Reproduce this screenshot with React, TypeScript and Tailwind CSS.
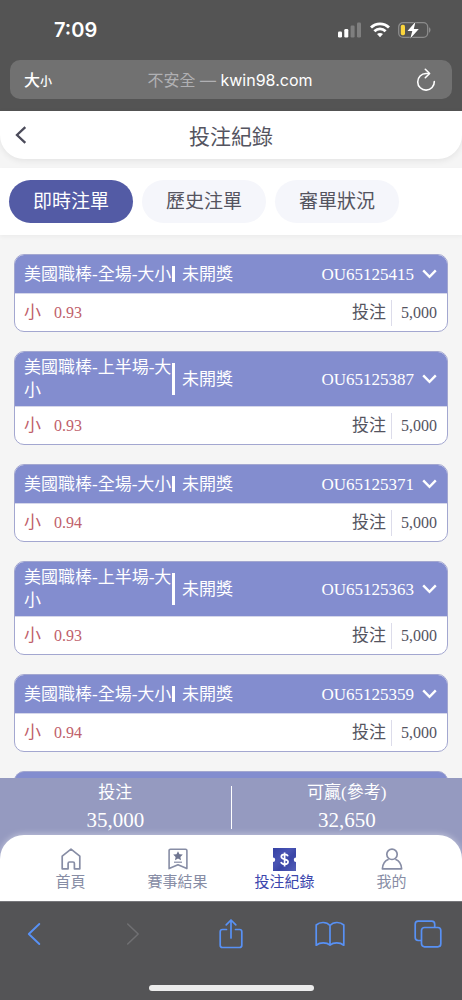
import React from "react";

const sans = 'font-["Inter","Noto_Sans_CJK_TC",sans-serif]';
const serif = 'font-["Liberation_Serif","Noto_Sans_CJK_TC",serif]';

type Bet = {
  id: string;
  title: string;
  odds: string;
};

const bets: Bet[] = [
  { id: "OU65125415", title: "美國職棒-全場-大小", odds: "0.93" },
  { id: "OU65125387", title: "美國職棒-上半場-大小", odds: "0.93" },
  { id: "OU65125371", title: "美國職棒-全場-大小", odds: "0.94" },
  { id: "OU65125363", title: "美國職棒-上半場-大小", odds: "0.93" },
  { id: "OU65125359", title: "美國職棒-全場-大小", odds: "0.94" },
];

const tabs = ["即時注單", "歷史注單", "審單狀況"];

const StatusBar = () => (
  <div className="flex h-[60px] items-center justify-between pl-[54px] pr-[31px]">
    <span className="text-xl font-semibold">7:09</span>
    <div className="flex items-center gap-2">
      <svg width="24" height="16" viewBox="0 0 24 16" fill="#fff">
        <rect x="0" y="9.5" width="4" height="6" rx="1.2" />
        <rect x="6.3" y="7" width="4" height="8.5" rx="1.2" />
        <rect x="12.6" y="3.5" width="4" height="12" rx="1.2" opacity=".25" />
        <rect x="19" y="0.5" width="4" height="15" rx="1.2" opacity=".25" />
      </svg>
      <svg width="20" height="16" viewBox="0 0 20 16" fill="none" stroke="#fff" strokeWidth="2.8">
        <path d="M1 5.6C6 .6 14 .6 19 5.6" />
        <path d="M4.4 9.3c3.2-3.2 8-3.2 11.2 0" />
        <path d="M10 15.2l-3-3.1c1.7-1.5 4.3-1.5 6 0z" fill="#fff" stroke="none" />
      </svg>
      <svg width="33" height="18" viewBox="0 0 33 18" fill="none">
        <rect x=".7" y="1.7" width="29" height="14.6" rx="4.3" stroke="#8b8b8b" strokeWidth="1.3" />
        <path d="M31 6.3c2 .8 2 4.6 0 5.4z" fill="#8b8b8b" />
        <rect x="2.8" y="3.8" width="4.2" height="10.4" rx="1.6" fill="#fbd53c" />
        <path
          d="M17.5.8L9.5 10h4.8l-2 7.4L20.8 8h-5z"
          fill="#fff"
          stroke="#545454"
          strokeWidth="1.6"
          paintOrder="stroke"
        />
      </svg>
    </div>
  </div>
);

const AddressBar = () => (
  <div className="mx-2.5 mb-3 flex h-[39px] items-center justify-between rounded-[10px] bg-[#717171] pl-3.5 pr-4">
    <button aria-label="文字大小" className="w-10 text-left font-medium">
      <span className="text-base">大</span>
      <span className="text-xs">小</span>
    </button>
    <p className="text-base">
      <span className="text-[#b0b0b3]">不安全 — </span>kwin98.com
    </p>
    <button aria-label="重新載入" className="flex w-10 justify-end">
      <svg width="20" height="24" viewBox="0 0 20 24" fill="none" stroke="#fff" strokeWidth="1.6" strokeLinecap="round" strokeLinejoin="round">
        <path d="M13 5.5H10A8.300 8.300 0 1 0 18.300 13.500" />
        <path d="M9.300 1.300l4.300 4.200-4.300 4.200" />
      </svg>
    </button>
  </div>
);

const BetCard = ({ bet }: { bet: Bet }) => (
  <article className={`overflow-hidden rounded-[10px] border border-[#a3a7d0] bg-white text-[17px] ${serif}`}>
    <div className="flex min-h-[38px] items-center bg-[#838dcf] py-1 pl-[9px] pr-2.5 leading-[23px] text-white">
      <div className="flex items-center">
        <h2 className="w-[148px]">{bet.title}</h2>
        <span className="flex items-center self-stretch">
          <span className="h-[70%] w-[3px] bg-white" />
        </span>
      </div>
      <span className="ml-[7px]">未開獎</span>
      <button aria-label={`展開 ${bet.id}`} className="ml-auto flex items-center gap-2">
        {bet.id}
        <svg width="15" height="10" viewBox="0 0 15 10" fill="none" stroke="#fff" strokeWidth="2.4">
          <path d="M1.200 1.400l6.300 6.400 6.300-6.400" />
        </svg>
      </button>
    </div>
    <div className="flex h-[38px] items-center border-t border-[#d5d7ea] pl-[9px] pr-2.5 text-[#54545f]">
      <p className="flex gap-[13px] text-[#c05f6b]">
        小 <span className="text-base leading-[26px]">{bet.odds}</span>
      </p>
      <span className="ml-auto">投注</span>
      <span className="ml-[5px] border-l border-[#dcdcea] pl-[9px] text-base leading-[26px]">5,000</span>
    </div>
  </article>
);

const HomeIcon = () => (
  <svg width="20" height="22" viewBox="0 0 20 22" fill="none" stroke="#878da5" strokeWidth="1.7" strokeLinejoin="round">
    <path d="M1.200 8.200L10 1.200l8.800 7V20.800h-5.400v-5.400q0-1.400-1.400-1.400H8.500q-1.400 0-1.400 1.400v5.400H1.200z" />
  </svg>
);

const ResultIcon = () => (
  <svg width="20" height="22" viewBox="0 0 20 22" fill="none" stroke="#878da5" strokeWidth="1.6" strokeLinejoin="round">
    <path d="M2.500 1.200h15q1.400 0 1.400 1.400v18L10 16.800l-8.900 3.800v-18q0-1.400 1.400-1.400z" />
    <path d="M10 3.200l1.500 3 3.300.4-2.400 2.300.6 3.300-3-1.600-3 1.600.6-3.300-2.400-2.300 3.300-.4z" fill="#6f7590" stroke="none" />
    <path d="M6 14.200h8" strokeWidth="1.2" />
  </svg>
);

const BetsIcon = () => (
  <svg width="23" height="23" viewBox="0 0 23 23">
    <defs>
      <linearGradient id="ticket" x1="0" y1="0" x2="1" y2="1">
        <stop offset="0" stopColor="#3541a4" />
        <stop offset=".4" stopColor="#4954b4" />
        <stop offset=".6" stopColor="#3a45a6" />
        <stop offset="1" stopColor="#5560b8" />
      </linearGradient>
    </defs>
    <path d="M0 0h23v9.500a2.200 2.200 0 0 0 0 4.400V23H0v-9.100a2.200 2.200 0 0 0 0-4.400z" fill="url(#ticket)" />
    <path
      d="M15 8.300c-.5-1.300-1.700-1.900-3.400-1.900-2 0-3.300.9-3.300 2.400 0 3.400 6.800 1.600 6.800 5 0 1.600-1.400 2.500-3.500 2.500-1.900 0-3.200-.8-3.600-2.200M11.600 4.400v14"
      fill="none"
      stroke="#fff"
      strokeWidth="1.7"
    />
  </svg>
);

const MineIcon = () => (
  <svg width="22" height="22" viewBox="0 0 22 22" fill="none" stroke="#878da5" strokeWidth="1.7" strokeLinejoin="round">
    <circle cx="11" cy="6.300" r="5.200" />
    <path d="M7.700 11.200C3.900 12.600 1.600 16.300 1.400 20.800h19.200c-.2-4.500-2.500-8.200-6.300-9.600" />
  </svg>
);

const navItems = [
  { label: "首頁", icon: <HomeIcon /> },
  { label: "賽事結果", icon: <ResultIcon /> },
  { label: "投注紀錄", icon: <BetsIcon />, active: true },
  { label: "我的", icon: <MineIcon /> },
];

const Footer = () => (
  <footer className="shrink-0 bg-[#959ac0]">
    <dl className={`flex h-[57px] pt-0.5 text-center text-white ${serif}`}>
      <div className="flex-1">
        <dt className="text-[17px] leading-[26px]">投注</dt>
        <dd className="text-[21px] leading-[29px]">35,000</dd>
      </div>
      <div className="mb-1.5 mt-1.5 w-px bg-white" />
      <div className="flex-1">
        <dt className="text-[17px] leading-[26px]">可贏(參考)</dt>
        <dd className="text-[21px] leading-[29px]">32,650</dd>
      </div>
    </dl>
    <nav className="flex h-[66px] justify-between rounded-t-[24px] bg-white px-[17px] shadow-[0_-1px_6px_rgba(255,255,255,0.4)]">
      {navItems.map((item) => (
        <a
          key={item.label}
          href="#"
          className={`flex flex-1 flex-col items-center pt-3 text-[15px] leading-[22px] ${
            item.active ? "text-[#3b46ad]" : "text-[#878da5]"
          }`}
        >
          <span className="flex h-6 items-center">{item.icon}</span>
          {item.label}
        </a>
      ))}
    </nav>
  </footer>
);

const BrowserToolbar = () => (
  <div className="flex h-[99px] shrink-0 flex-col justify-between border-t border-[#77777b] bg-[#545456] pb-[9px] pt-4">
    <div className="flex items-center justify-between px-3.5 text-[#5891f5]">
      <button aria-label="上一頁" className="flex w-10 justify-center">
        <svg width="14" height="24" viewBox="0 0 14 24" fill="none" stroke="currentColor" strokeWidth="1.9" strokeLinecap="round" strokeLinejoin="round">
          <path d="M12.300 2L1.800 12l10.500 10" />
        </svg>
      </button>
      <button aria-label="下一頁" className="flex w-10 justify-center text-[#707073]" disabled>
        <svg width="14" height="24" viewBox="0 0 14 24" fill="none" stroke="currentColor" strokeWidth="1.5" strokeLinecap="round" strokeLinejoin="round">
          <path d="M1.700 2l10.500 10L1.700 22" />
        </svg>
      </button>
      <button aria-label="分享" className="flex w-10 justify-center">
        <svg width="24" height="32" viewBox="0 0 24 32" fill="none" stroke="currentColor" strokeWidth="1.7" strokeLinecap="round" strokeLinejoin="round">
          <path d="M7.500 11.500H3.500q-2.300 0-2.300 2.300v13.400q0 2.300 2.300 2.300h17q2.300 0 2.300-2.300V13.800q0-2.300-2.300-2.300h-4" />
          <path d="M12 20V2.300M7.200 6.800L12 2l4.800 4.800" />
        </svg>
      </button>
      <button aria-label="書籤" className="flex w-10 justify-center">
        <svg width="30" height="26" viewBox="0 0 30 26" fill="none" stroke="currentColor" strokeWidth="1.7" strokeLinejoin="round">
          <path d="M15 4.500C11.500.6 5 .6 1.200 4v20.200c4-3 10.300-3 13.800 0 3.500-3 9.800-3 13.800 0V4C25 .6 18.500.6 15 4.500zM15 4.500v19.700" />
        </svg>
      </button>
      <button aria-label="分頁" className="flex w-10 justify-center">
        <svg width="28" height="28" viewBox="0 0 28 28" fill="none" stroke="currentColor" strokeWidth="1.7">
          <path d="M7.500 20.500H4.200q-3 0-3-3V4.200q0-3 3-3h13.500q3 0 3 3v3.300" />
          <rect x="7.500" y="7.500" width="19.300" height="19.300" rx="3" />
        </svg>
      </button>
    </div>
    <div className="h-1.5 w-[165px] self-center rounded-full bg-[#ececec]" />
  </div>
);

const App = () => {
  return (
    <div className={`flex h-screen flex-col bg-[#f5f5f5] ${sans}`}>
      <div className="shrink-0 bg-[#545454] text-white">
        <StatusBar />
        <AddressBar />
      </div>

      <header className="grid h-12 shrink-0 grid-cols-[1fr_auto_1fr] items-center rounded-b-[24px] bg-white px-[15px] text-[#54545f] shadow-[0_2px_6px_rgba(0,0,0,0.07)]">
        <button aria-label="返回" className="justify-self-start">
          <svg width="12" height="18" viewBox="0 0 12 18" fill="none" stroke="#4b4b5a" strokeWidth="2.3">
            <path d="M10.300 1.200L2 9l8.300 7.800" />
          </svg>
        </button>
        <h1 className="pt-1 text-[21px] leading-7">投注紀錄</h1>
      </header>

      {/* 注單分類 */}
      <div className="mt-[9px] flex shrink-0 gap-[9px] bg-white px-[9px] py-3 shadow-[0_2px_4px_rgba(0,0,0,0.04)]">
        {tabs.map((tab, i) => (
          <button
            key={tab}
            className={`h-[43px] rounded-full px-6 pt-0.5 text-[19px] ${
              i === 0 ? "bg-[#535ba5] text-white" : "bg-[#f5f6fb] text-[#54545f]"
            }`}
          >
            {tab}
          </button>
        ))}
      </div>

      <main className="min-h-0 flex-1 space-y-[19px] overflow-y-auto px-3.5 pt-[19px] [scrollbar-width:none]">
        {bets.map((bet) => (
          <BetCard key={bet.id} bet={bet} />
        ))}
        {/* 下一筆載入中 */}
        <div className="h-[78px] rounded-[10px] border border-[#a3a7d0] bg-[#838dcf]" />
      </main>

      <Footer />
      <BrowserToolbar />
    </div>
  );
};

export default App;
